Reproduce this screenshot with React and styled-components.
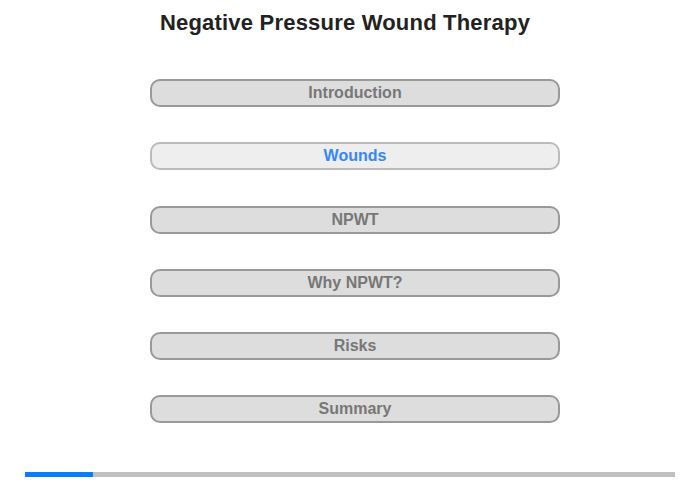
import styled, { createGlobalStyle } from "styled-components";

const sections = [
  { title: "Introduction" },
  { title: "Wounds", active: true },
  { title: "NPWT" },
  { title: "Why NPWT?" },
  { title: "Risks" },
  { title: "Summary" },
];

const progress = 68 / 650;

const GlobalStyle = createGlobalStyle`
  html, body {
    margin: 0;
    padding: 0;
    background: #ffffff;
    font-family: "Liberation Sans", Arial, sans-serif;
  }
`;

function App() {
  return (
    <>
      <GlobalStyle />
      <Page>
        <Title>Negative Pressure Wound Therapy</Title>
        <Menu>
          {sections.map((s) => (
            <MenuButton key={s.title} $active={s.active}>
              {s.title}
            </MenuButton>
          ))}
        </Menu>
        <ProgressTrack>
          <ProgressFill style={{ width: `${progress * 100}%` }} />
        </ProgressTrack>
      </Page>
    </>
  );
}

const Page = styled.div`
  width: 700px;
  height: 480px;
  display: flex;
  flex-direction: column;
  align-items: center;
  box-sizing: border-box;
  padding-top: 11px;
`;
const Title = styled.h1`
  margin: 0 10px 0 0;
  font-size: 22px;
  line-height: 24px;
  letter-spacing: 0.2px;
  font-weight: bold;
  color: #222222;
`;
const Menu = styled.div`
  display: flex;
  flex-direction: column;
  gap: 35.3px;
  margin: 44px 0 0 10px;
  width: 410px;
`;
const MenuButton = styled.div`
  box-sizing: border-box;
  height: 28px;
  border: 2px solid ${(p) => (p.$active ? "#bbbbbb" : "#999999")};
  border-radius: 10px;
  background: ${(p) => (p.$active ? "#eeeeee" : "#dddddd")};
  color: ${(p) => (p.$active ? "#3388ff" : "#777777")};
  font-size: 16px;
  font-weight: bold;
  display: flex;
  align-items: center;
  justify-content: center;
`;
const ProgressTrack = styled.div`
  margin-top: auto;
  margin-bottom: 3px;
  width: 650px;
  height: 5px;
  background: #c0c0c0;
`;
const ProgressFill = styled.div`
  height: 100%;
  background: #0a7cff;
`;

export default App;
